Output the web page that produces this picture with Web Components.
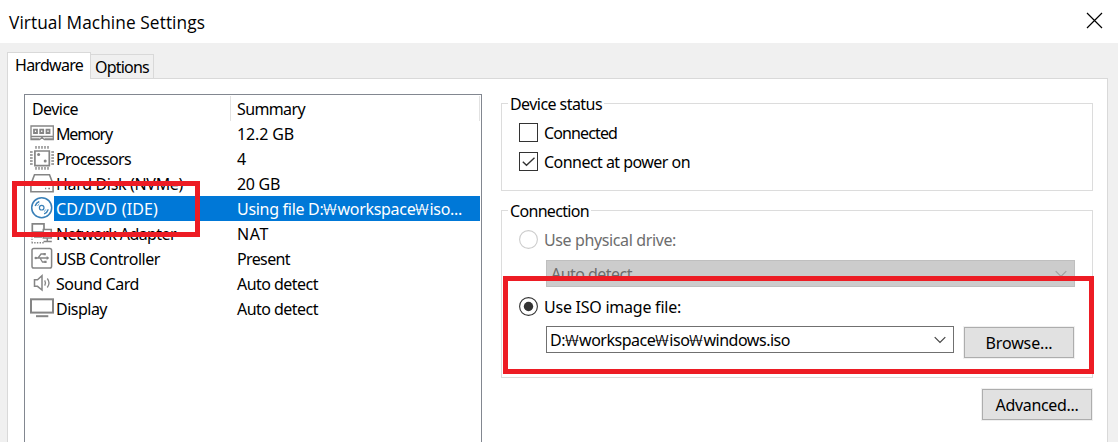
<!DOCTYPE html>
<html lang="en">
<head>
<meta charset="utf-8">
<title>Virtual Machine Settings</title>
<style>
html,body{margin:0;height:100%;overflow:hidden}
body{font:16px/20px "Noto Sans","Liberation Sans",sans-serif;color:#000;background:#f0f0f0}
</style>
</head>
<body>
<vm-settings></vm-settings>
<script>
function define(name, html, setup) {
  const tpl = document.createElement('template');
  tpl.innerHTML = html;
  customElements.define(name, class extends HTMLElement {
    connectedCallback() {
      if (this.shadowRoot) return;
      this.attachShadow({ mode: 'open' }).append(tpl.content.cloneNode(true));
      if (setup) setup.call(this, this.shadowRoot);
    }
  });
}

/* A label whose tracking is adjusted so that it fills the width "w". */
define('ui-label', `<style>:host{display:inline-block;white-space:pre;line-height:20px;height:20px}span{display:inline-block}</style><span></span>`, function (r) {
  const s = r.querySelector('span');
  const text = this.getAttribute('text');
  for (const part of text.split(/(₩)/)) {
    if (part === '₩') {
      const won = document.createElement('i');
      won.textContent = part;
      won.style.cssText = 'font:300 15px/20px "Open Sans","Noto Sans",sans-serif;display:inline-flex;justify-content:center;width:14px;letter-spacing:0;transform:scaleX(1.45)';
      s.append(won);
    } else s.append(part);
  }
  const w = +this.getAttribute('w');
  if (w) {
    const chars = text.replace(/₩/g, '').length;
    s.style.letterSpacing = ((w - s.getBoundingClientRect().width) / chars).toFixed(3) + 'px';
  }
});

const ICONS = {
  memory: `<path d="M1 5H23.300V18.700H14.500L12 16.700L9.500 18.700H1Z M1 15.500H23.300" stroke-width="1.300"/><path d="M1 18.200H9.500M14.500 18.200H23.500" stroke-width="1.800"/><path d="M4 8.700h3v3.300H4zM10.200 8.700h3v3.300h-3zM16.500 8.700h3v3.300h-3z" stroke-width="1.800"/>`,
  cpu: `<path d="M4.900 5H19.300V19.600H4.900Z" stroke-width="1.700"/><path d="M6 0v2.700M9 0v2.700M12 0v2.700M15 0v2.700M18 0v2.700M6 21v2.700M9 21v2.700M12 21v2.700M15 21v2.700M18 21v2.700M0 6h2.700M0 9h2.700M0 12h2.700M0 15h2.700M0 18h2.700M21.300 6h2.700M21.300 9h2.700M21.300 12h2.700M21.300 15h2.700M21.300 18h2.700" stroke-width="1.400"/><circle cx="8.600" cy="8.600" r="1.500" fill="#858585" stroke="none"/><circle cx="15.200" cy="15" r="1.500" fill="#858585" stroke="none"/>`,
  disk: `<path d="M4.500 3.700H19.500L23.100 13.200V20.700H.9V13.200ZM.9 13.700H23.100" stroke-width="1.600"/><path d="M15 17.500h1.200M18.300 17.500h1.700" stroke-width="1.600"/>`,
  disc: `<g stroke="#3a80b8"><circle cx="11.700" cy="11.700" r="10" stroke-width="1.500"/><circle cx="11.700" cy="11.700" r="2.300" stroke-width="1.200"/><path d="M5.200 10A6.700 6.700 0 0 1 9.300 5.500M18.200 13.400A6.700 6.700 0 0 1 14.100 17.900" stroke-width="1.500"/><path d="M7.600 9.900A4.500 4.500 0 0 1 9.300 7.900M15.800 13.500A4.500 4.500 0 0 1 14.100 15.500" stroke-width=".8"/></g>`,
  network: `<path d="M2.300 2.800H14V11H2.300ZM8 11V16M4 16H12" stroke-width="1.700"/><path d="M13.300 8.500H21.300V17H13.300ZM17.300 17V20.500M13.500 20.500H21.800" stroke-width="1.500" fill="#fff"/><path d="M1.500 21.700H15" stroke-dasharray="1.400 1.300" stroke-width="1.400"/><path d="M2 15V21" stroke-dasharray="1.400 1.300" stroke-width="1.200"/>`,
  usb: `<rect x="2" y="2.500" width="19.600" height="19.500" rx="1.800" stroke-width="1.500"/><path d="M5 12H18M8 12L11 8H14M10 12L12.500 16H15" stroke-width="1.300"/><path d="M16.700 9.900L19.300 12L16.700 14.100ZM13.500 7h2.300v2.300h-2.300zM14.300 14.800h2.300v2.300h-2.300z" fill="#858585" stroke="none"/><circle cx="5.800" cy="12" r="1.300" fill="#858585" stroke="none"/>`,
  sound: `<path d="M4.500 8.700H7.500L12 4.700V19L7.500 15.300H4.500Z" stroke-width="1.500"/><path d="M14.700 9.300Q16.300 12 14.700 14.700M17.300 7.500Q20.700 12 17.300 16.500" stroke-width="1.300"/>`,
  display: `<rect x="1" y="3.300" width="22" height="13.300" stroke-width="2"/><path d="M6 20.200H18.300" stroke-width="2"/>`
};
define('vm-icon', `<style>:host{display:block;width:24px;height:25px;flex:none}svg{display:block}</style><svg width="24" height="25" fill="none" stroke="#858585"></svg>`, function (r) {
  r.querySelector('svg').innerHTML = ICONS[this.getAttribute('name')];
});

define('device-list', `<style>
:host{display:block;box-sizing:border-box;width:458px;height:360px;border:1px solid #828790;background:#fff}
.head{display:grid;grid-template-columns:206px 1fr;height:26px}
.head div{display:flex;align-items:center;border-right:1px solid #e2e2e2;margin-top:1px;padding:1px 0 0 7px;box-sizing:border-box;height:25px}
.head div+div{padding-left:6px;margin-right:1px}
.row{display:flex;height:25px;padding:0 1px 0 5px}
.line{flex:1;display:grid;grid-template-columns:181px 1fr;align-items:center;padding:1px 0 0 2px;box-sizing:border-box}
.sel .line{background:#0078d7;color:#fff}
</style><div class="head"><div><ui-label text="Device" w="46"></ui-label></div><div><ui-label text="Summary" w="68"></ui-label></div></div><div id="rows"></div>`, function (r) {
  const rows = [
    ['memory', 'Memory', 56, '12.2 GB', 57], ['cpu', 'Processors', 75, '4', 9],
    ['disk', 'Hard Disk (NVMe)', 127, '20 GB', 43], ['disc', 'CD/DVD (IDE)', 102, 'Using file D:₩workspace₩iso...', 225],
    ['network', 'Network Adapter', 120, 'NAT', 32], ['usb', 'USB Controller', 104, 'Present', 53],
    ['sound', 'Sound Card', 83, 'Auto detect', 81], ['display', 'Display', 51, 'Auto detect', 81]];
  r.getElementById('rows').innerHTML = rows.map(([i, a, aw, b, bw]) =>
    `<div class="row ${i === 'disc' ? 'sel' : ''}"><vm-icon name="${i}"></vm-icon><div class="line"><ui-label text="${a}" w="${aw}"></ui-label><ui-label text="${b}" w="${bw}"></ui-label></div></div>`).join('');
});

define('group-box', `<style>
:host{display:block;position:relative;box-sizing:border-box;border:1px solid #dcdcdc;width:592px}
.legend{position:absolute;left:6px;top:-10px;height:20px;background:#fff;padding:0 2px}
</style><div class="legend"><slot name="legend"></slot></div><slot></slot>`);

define('option-mark', `<style>
:host{display:flex;align-items:flex-start;gap:6px;height:20px}svg{flex:none;display:block}
:host([disabled]){color:#6d6d6d}
</style><svg width="19" height="19" fill="none"></svg><slot></slot>`, function (r) {
  const on = this.hasAttribute('checked');
  const c = this.hasAttribute('disabled') ? '#ccc' : '#333';
  r.querySelector('svg').innerHTML = this.getAttribute('type') === 'radio'
    ? `<circle cx="9.500" cy="9.500" r="8.900" stroke="${c}" stroke-width="1.100"/>` + (on ? `<circle cx="9.500" cy="9.500" r="4.700" fill="#333"/>` : '')
    : `<rect x=".5" y=".5" width="18" height="18" stroke="#333"/>` + (on ? `<path d="M3.800 9.700L7.500 13.300L15.500 5.700" stroke="#333" stroke-width="1.400"/>` : '');
});

define('combo-box', `<style>
:host{display:flex;box-sizing:border-box;align-items:center;justify-content:space-between;height:27px;border:1px solid #707070;background:#fff;padding:0 7px 0 3px}
:host([disabled]){background:#ccc;border-color:#bfbfbf;color:#6d6d6d;padding-left:4px}
svg{stroke:#444}:host([disabled]) svg{stroke:#a0a0a0}
</style><slot></slot><svg width="12" height="8" fill="none" stroke-width="1.200"><path d="M.7 1.200L6 6.500L11.300 1.200"/></svg>`);

define('push-button', `<style>
:host{display:flex;align-items:center;justify-content:center;box-sizing:border-box;width:110px;height:31px;background:#e1e1e1;border:1px solid #adadad;box-shadow:0 0 0 1px #f0f0f0}
</style><slot></slot>`);

define('marker-box', `<style>:host{display:block;position:absolute;box-sizing:border-box;border:5px solid #ed1c24;pointer-events:none}</style>`);

define('vm-settings', `<style>
:host{display:flex;flex-direction:column;position:relative;height:442px;width:1118px;overflow:hidden}
header,nav,main{flex:none}
header{display:flex;justify-content:space-between;height:43px;background:#fff;padding:0 15px 0 9px;box-sizing:border-box}
header ui-label{font-size:17.300px;font-family:"Open Sans","Noto Sans",sans-serif;margin-top:13px}
header svg{margin-top:12px}
nav{display:flex;align-items:flex-end;height:35px;padding-left:7px}
.tab{box-sizing:border-box;border:1px solid #d9d9d9;border-bottom:0}
.on{width:84px;height:27px;margin-bottom:-1px;background:#fff;position:relative;padding:2px 0 0 7px}
.off{width:63px;height:24px;border-left:0;padding:2px 0 0 4px}
main{display:flex;gap:19px;box-sizing:border-box;width:1101px;height:370px;margin-left:7px;border:1px solid #d9d9d9;background:#fff;padding:15px 0 0 16px}
aside{display:flex;flex-direction:column}
.g1{height:88px;margin-top:9px;padding:19px 0 0 17px;display:flex;flex-direction:column;gap:9px}
.g2{height:168px;margin-top:19px;padding:19px 17px 0 17px}
.g2 combo-box{margin-left:27px}
.path{display:flex;justify-content:space-between;margin-top:9px}
.path combo-box{width:408px}
</style>
<header><ui-label text="Virtual Machine Settings" w="196"></ui-label><svg width="17" height="17" stroke="#000" stroke-width="1.200"><path d="M1 1L16 16M16 1L1 16"/></svg></header>
<nav><div class="tab on"><ui-label text="Hardware" w="68"></ui-label></div><div class="tab off"><ui-label text="Options" w="54"></ui-label></div></nav>
<main><device-list></device-list><aside>
<group-box class="g1"><ui-label slot="legend" text="Device status" w="92"></ui-label>
<option-mark><ui-label text="Connected" w="73"></ui-label></option-mark>
<option-mark checked><ui-label text="Connect at power on" w="146"></ui-label></option-mark></group-box>
<group-box class="g2"><ui-label slot="legend" text="Connection" w="79"></ui-label>
<option-mark type="radio" disabled><ui-label text="Use physical drive:" w="132"></ui-label></option-mark>
<combo-box disabled style="margin-top:10px"><ui-label text="Auto detect" w="81"></ui-label></combo-box>
<option-mark type="radio" checked style="margin-top:10px"><ui-label text="Use ISO image file:" w="137"></ui-label></option-mark>
<div class="path"><combo-box><ui-label text="D:₩workspace₩iso₩windows.iso" w="240"></ui-label></combo-box><push-button style="margin:1px 1px 0 0"><ui-label text="Browse..." w="67"></ui-label></push-button></div></group-box>
<push-button style="margin:11px 0 0 481px"><ui-label text="Advanced..." w="83"></ui-label></push-button>
</aside></main>
<marker-box style="left:12px;top:181px;width:188px;height:56px"></marker-box>
<marker-box style="left:503px;top:276px;width:591px;height:98px"></marker-box>`);
</script>
</body>
</html>
